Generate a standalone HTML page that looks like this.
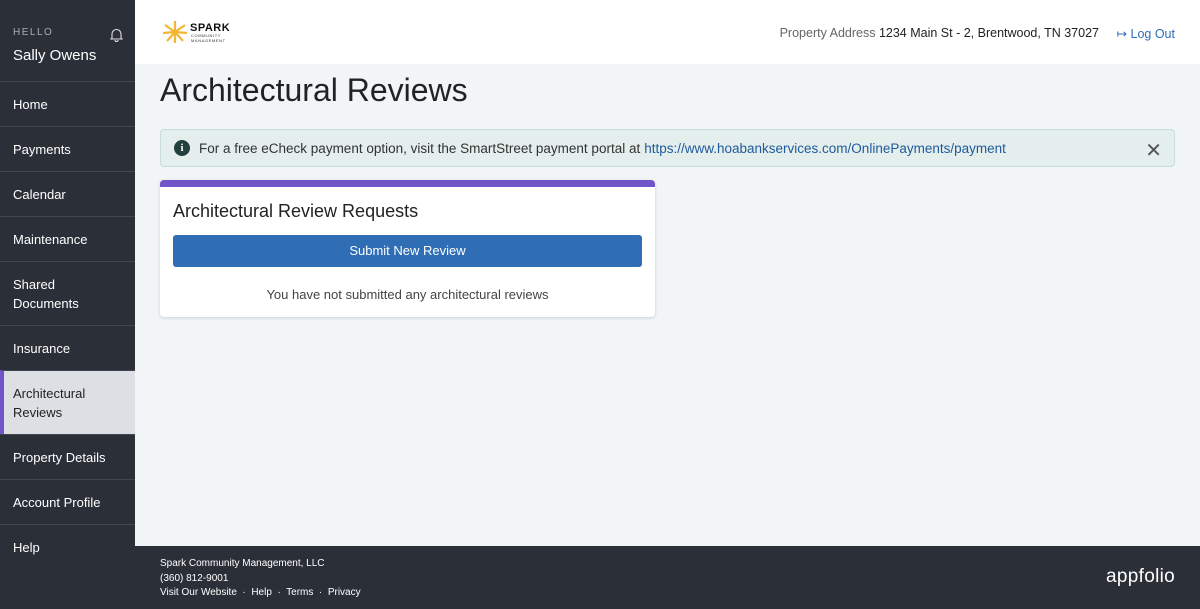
<!DOCTYPE html>
<html><head><meta charset="utf-8"><style>
*{box-sizing:border-box;margin:0;padding:0}
body{width:1200px;height:609px;overflow:hidden;font-family:"Liberation Sans",sans-serif;background:#2b2f38;position:relative}
.side{position:absolute;left:0;top:0;width:135px;height:609px;background:#2b2f38;color:#fff}
.hello{position:absolute;left:13px;top:27px;font-size:10px;letter-spacing:1.5px;color:#a9adb4}
.name{position:absolute;left:13px;top:47px;font-size:15px}
.bell{position:absolute;left:110px;top:27px}
.nav{position:absolute;left:0;top:81px;width:135px}
.nav div{border-top:1px solid #41454d;padding:0 13px;font-size:13px;display:flex;align-items:center;height:45px;line-height:19px}
.nav div.t{height:64px}
.nav div.a{background:#dcdfe3;color:#222;border-left:4px solid #6f55c8;padding-left:9px}
.main{position:absolute;left:135px;top:0;width:1065px;height:546px;background:#f1f5f8}
.hdr{height:64px;background:#fff;position:relative}
.addr{position:absolute;right:101px;top:26px;font-size:12.5px;color:#666}
.addr b{font-weight:normal;color:#222}
.lo{position:absolute;right:25px;top:26px;font-size:12.5px;color:#2f6db5}
h1{position:absolute;left:25px;top:72px;font-weight:normal;font-size:32px;color:#222}
.alert{position:absolute;left:25px;top:129px;width:1015px;height:38px;background:#e3eeed;border:1px solid #c8dcdb;border-radius:4px;font-size:13.5px;color:#333;display:flex;align-items:center;padding-left:38px}
.alert a{color:#1f5a9c;text-decoration:none;margin-left:4px}
.ic{position:absolute;left:13px;top:10px;width:16px;height:16px;border-radius:50%;background:#23403e;color:#fff;font-size:11px;font-weight:bold;text-align:center;line-height:16px;font-family:"Liberation Serif",serif}
.x{position:absolute;right:12px;top:8px;font-size:20px;color:#555}
.card{position:absolute;left:25px;top:180px;width:495px;height:137px;background:#fff;border-top:7px solid #6f55c8;border-radius:4px;box-shadow:0 1px 3px rgba(0,0,0,.15)}
.card h2{font-weight:normal;font-size:18px;color:#222;position:absolute;left:13px;top:14px}
.btn{position:absolute;left:13px;top:48px;width:469px;height:32px;background:#2f6db5;border-radius:3px;color:#fff;font-size:13px;text-align:center;line-height:32px}
.none{position:absolute;left:0;width:100%;top:100px;text-align:center;font-size:13px;color:#444}
.foot{position:absolute;left:160px;top:557px;color:#fff;font-size:10px;line-height:14.5px}
.app{position:absolute;right:25px;top:566px;color:#fff;font-size:19px;letter-spacing:.3px}
</style></head><body>
<div class="side">
<div class="hello">HELLO</div>
<svg class="bell" width="13" height="15" viewBox="0 0 13 15"><path d="M2 11V7a4.5 4.5 0 0 1 9 0v4l1 1H1z M5 13a1.5 1.5 0 0 0 3 0" fill="none" stroke="#ddd" stroke-width="1.1"/></svg>
<div class="name">Sally Owens</div>
<div class="nav">
<div>Home</div><div>Payments</div><div>Calendar</div><div>Maintenance</div>
<div class="t">Shared<br>Documents</div><div>Insurance</div>
<div class="t a">Architectural<br>Reviews</div><div>Property Details</div><div>Account Profile</div><div>Help</div>
</div></div>
<div class="main">
<div class="hdr">
<svg style="position:absolute;left:27px;top:20px" width="26" height="24" viewBox="0 0 26 24"><g stroke="#f2b632" stroke-width="2.2"><line x1="13" y1="12" x2="13" y2="1"/><line x1="13" y1="12" x2="3" y2="5"/><line x1="13" y1="12" x2="23" y2="5"/><line x1="13" y1="12" x2="1" y2="13"/><line x1="13" y1="12" x2="25" y2="13"/><line x1="13" y1="12" x2="5" y2="21"/><line x1="13" y1="12" x2="21" y2="21"/><line x1="13" y1="12" x2="13" y2="23"/></g></svg>
<div style="position:absolute;left:55px;top:22px;font-size:11px;font-weight:bold;color:#111;letter-spacing:.5px">SPARK</div>
<div style="position:absolute;left:56px;top:34px;font-size:4px;color:#333;letter-spacing:.6px;line-height:4.5px">COMMUNITY<br>MANAGEMENT</div>
<div class="addr">Property Address <b>1234 Main St - 2, Brentwood, TN 37027</b></div>
<div class="lo">&#x21A6; Log Out</div>
</div>
<h1>Architectural Reviews</h1>
<div class="alert"><span class="ic">i</span>For a free eCheck payment option, visit the SmartStreet payment portal at <a>https://www.hoabankservices.com/OnlinePayments/payment</a><span class="x">✕</span></div>
<div class="card"><h2>Architectural Review Requests</h2><div class="btn">Submit New Review</div><div class="none">You have not submitted any architectural reviews</div></div>
</div>
<div class="foot">Spark Community Management, LLC<br>(360) 812-9001<br>Visit Our Website &nbsp;·&nbsp; Help &nbsp;·&nbsp; Terms &nbsp;·&nbsp; Privacy</div>
<div class="app">appfolio</div>
</body></html>
